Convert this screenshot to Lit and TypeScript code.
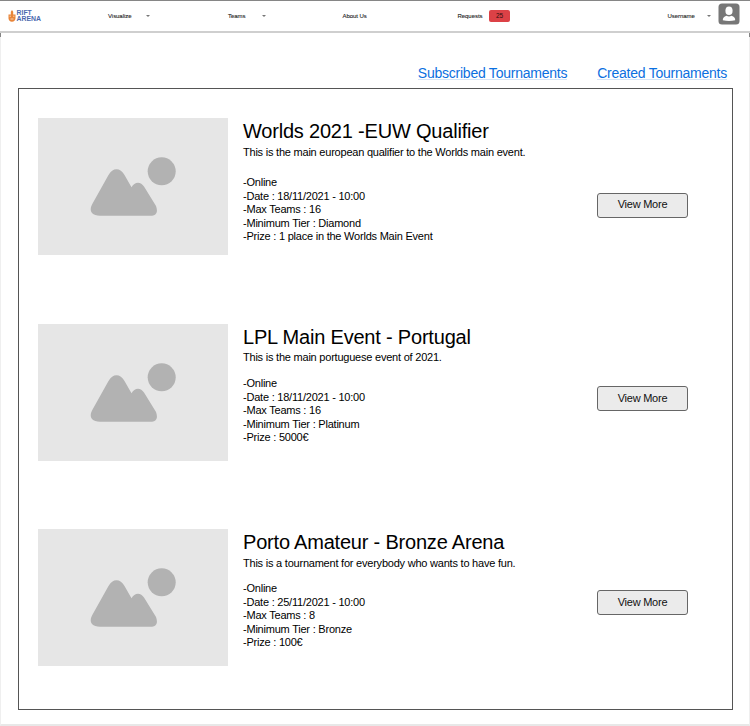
import { LitElement, html, css } from "lit";
import { customElement, property } from "lit/decorators.js";

interface Tournament {
  title: string;
  summary: string;
  details: string[];
  gap: number;
  buttonTop: number;
}

const TOURNAMENTS: Tournament[] = [
  {
    title: "Worlds 2021 -EUW Qualifier",
    summary: "This is the main european qualifier to the Worlds main event.",
    details: [
      "-Online",
      "-Date : 18/11/2021 - 10:00",
      "-Max Teams : 16",
      "-Minimum Tier : Diamond",
      "-Prize : 1 place in the Worlds Main Event",
    ],
    gap: 17,
    buttonTop: 75,
  },
  {
    title: "LPL Main Event - Portugal",
    summary: "This is the main portuguese event of 2021.",
    details: [
      "-Online",
      "-Date : 18/11/2021 - 10:00",
      "-Max Teams : 16",
      "-Minimum Tier : Platinum",
      "-Prize : 5000€",
    ],
    gap: 12.5,
    buttonTop: 62.9,
  },
  {
    title: "Porto Amateur - Bronze Arena",
    summary: "This is a tournament for everybody who wants to have fun.",
    details: [
      "-Online",
      "-Date : 25/11/2021 - 10:00",
      "-Max Teams : 8",
      "-Minimum Tier : Bronze",
      "-Prize : 100€",
    ],
    gap: 12,
    buttonTop: 61.4,
  },
];

@customElement("nav-bar")
export class NavBar extends LitElement {
  static styles = css`
    :host {
      display: block;
      height: 37px;
    }
    .bar {
      box-sizing: border-box;
      height: 33px;
      display: grid;
      grid-template-columns: 108px 120px 114.5px 115px 31.5px 178.5px 50.5px 1fr;
      align-items: center;
      border-top: 1px solid #868686;
      border-bottom: 2px solid #cfcfcf;
      background: #fff;
      color: #222;
      font-size: 6px;
      line-height: 8px;
      white-space: nowrap;
    }
    .edge {
      height: 38px;
      margin-bottom: -38px;
      box-sizing: border-box;
      border-left: 1px solid #858585;
      border-right: 1px solid #858585;
    }
    .logo {
      display: flex;
      align-items: center;
      padding-left: 8px;
      gap: 0.5px;
      color: #4b69ae;
      font-weight: bold;
      font-size: 6.9px;
      line-height: 6.4px;
    }
    .item {
      display: flex;
      align-items: center;
      letter-spacing: -0.05px;
      -webkit-text-stroke: 0.1px #222;
    }
    .caret {
      width: 0;
      height: 0;
      border: 2px solid transparent;
      border-top-color: #777;
      border-bottom: 0;
    }
    .c1 { margin-left: 15px; }
    .c2 { margin-left: 16.5px; }
    .c3 { margin-left: 12px; }
    .badge {
      width: 21px;
      height: 12px;
      border-radius: 2px;
      background: #dc4146;
      color: #301010;
      text-align: center;
      line-height: 12px;
      font-size: 6.5px;
    }
    svg { display: block; }
    .avatar { margin-bottom: 4px; }
  `;
  render() {
    return html`
      <div class="edge"></div>
      <nav class="bar">
        <div class="logo">
          <svg width="8" height="12" viewBox="0 0 8 12">
            <path d="M4 0L5.2 1.8V4.4H7.5V8.5Q7.2 11.6 4 11.8Q.8 11.6.5 8.5V4.4H2.8V1.8Z" fill="#e98539" />
            <path d="M1.5 6.2H3M5 6.2H6.5M2.5 9H5.5" stroke="#fff" stroke-width=".6" />
          </svg>
          <div>RIFT<br />ARENA</div>
        </div>
        <div class="item">Visualize<i class="caret c1"></i></div>
        <div class="item">Teams<i class="caret c2"></i></div>
        <div class="item">About Us</div>
        <div class="item">Requests</div>
        <div class="badge">25</div>
        <div class="item">Username<i class="caret c3"></i></div>
        <svg class="avatar" width="23" height="22" viewBox="0 0 23 22">
          <rect x="0.5" y="0.5" width="21" height="21" rx="3.5" fill="#777" />
          <ellipse cx="11" cy="7.8" rx="3.6" ry="4.3" fill="#fff" />
          <path d="M4.8 17.2Q4.6 14 8.5 12.8Q11 14.2 13.500 12.800Q17.400 14 17.200 17.200Q11 18.600 4.800 17.200Z" fill="#fff" />
        </svg>
      </nav>
    `;
  }
}

@customElement("image-placeholder")
export class ImagePlaceholder extends LitElement {
  static styles = css`
    :host {
      display: block;
      width: 190px;
      height: 137.3px;
      background: #e6e6e6;
    }
    svg { display: block; }
  `;
  render() {
    return html`
      <svg width="190" height="137" viewBox="0 0 190 137">
        <circle cx="123.7" cy="53.3" r="14" fill="#b2b2b2" />
        <path
          d="M54 86.5L70.5 57Q73.8 51.3 78.5 51.3Q83.2 51.3 86.5 57L93.5 69.3Q96 64.7 100 64.7Q103.5 64.7 106 68.5L118 88Q121.5 97.8 112 97.8H62Q51 97.2 53 89Z"
          fill="#b2b2b2"
        />
      </svg>
    `;
  }
}

@customElement("tournament-row")
export class TournamentRow extends LitElement {
  @property({ attribute: false }) item!: Tournament;

  static styles = css`
    :host {
      display: grid;
      grid-template-columns: 190px 354px 106px;
      padding-left: 19px;
      height: 205.5px;
      align-items: start;
    }
    .info {
      padding-left: 15px;
      color: #000;
      white-space: nowrap;
      font-size: 11px;
      line-height: 13.5px;
      letter-spacing: -0.22px;
    }
    .title {
      margin: 0;
      font-size: 20px;
      font-weight: normal;
      line-height: 27.5px;
      letter-spacing: -0.2px;
    }
    .button {
      box-sizing: border-box;
      width: 91px;
      height: 25px;
      margin-left: 15px;
      padding: 0.4px 0 2px;
      border: 1px solid #666;
      border-radius: 3px;
      background: #ebebeb;
      color: #111;
      font: 11px/21px "Liberation Sans", Arial, sans-serif;
      letter-spacing: -0.23px;
      text-align: center;
    }
  `;
  render() {
    const t = this.item;
    return html`
      <image-placeholder></image-placeholder>
      <div class="info">
        <h2 class="title">${t.title}</h2>
        <div>${t.summary}</div>
        <div style="margin-top:${t.gap}px">${t.details.map((d) => html`<div>${d}</div>`)}</div>
      </div>
      <button class="button" style="margin-top:${t.buttonTop}px">View More</button>
    `;
  }
}

@customElement("app-root")
export class AppRoot extends LitElement {
  static styles = css`
    :host {
      display: block;
      box-sizing: border-box;
      height: 726px;
      overflow: hidden;
      background: #fff;
      font-family: "Liberation Sans", Arial, sans-serif;
    }
    .page {
      box-sizing: border-box;
      height: 689px;
      border: 1px solid #efefef;
      border-top: 0;
      border-bottom: 2px solid #e8e8e8;
    }
    .links {
      display: flex;
      justify-content: flex-end;
      gap: 30px;
      height: 51px;
      box-sizing: border-box;
      padding: 28px 22px 0 0;
      font-size: 14px;
      line-height: 16px;
      letter-spacing: -0.24px;
    }
    .link {
      color: #0b6fe0;
      text-decoration: none;
      box-shadow: 0 1px #d5e5f7;
      height: 14px;
    }
    .panel {
      box-sizing: border-box;
      width: 715px;
      height: 622px;
      margin-left: 17px;
      padding-top: 29px;
      border: 1px solid #555;
    }
  `;
  render() {
    return html`
      <nav-bar></nav-bar>
      <main class="page">
        <div class="links">
          <a class="link">Subscribed Tournaments</a>
          <a class="link">Created Tournaments</a>
        </div>
        <section class="panel">
          ${TOURNAMENTS.map((t) => html`<tournament-row .item=${t}></tournament-row>`)}
        </section>
      </main>
    `;
  }
}
